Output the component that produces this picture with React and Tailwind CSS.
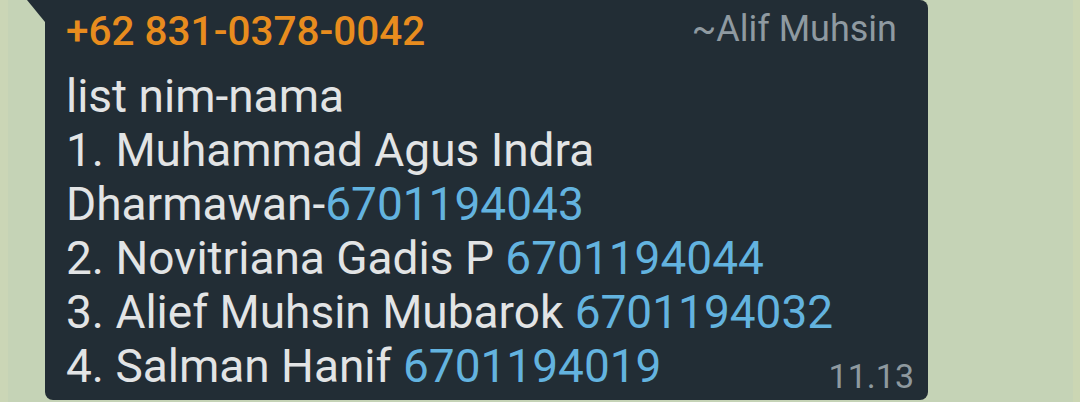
import React from 'react';

const lines = [
    { text: '2. Novitriana Gadis P ', nim: '6701194044' },
    { text: '3. Alief Muhsin Mubarok ', nim: '6701194032' },
];

function App() {
    return (
        <div className="w-[1080px] h-[402px] overflow-hidden flex bg-[#c5d3b6] font-['Roboto',sans-serif]">
            <div className="w-[8px] bg-[#cbd6b6]" />
            <div className="flex-1 flex pl-[19px]">
                {/* bubble tail */}
                <svg width="18" height="22" viewBox="0 0 18 22" className="shrink-0">
                    <polygon points="0,0 18,0 18,22" fill="#222d35" />
                </svg>
                <div className="w-[883px] h-[400px] bg-[#222d35] rounded-tr-[8px] rounded-b-[8px] pl-[21px] pr-[14px] pt-[7px]">
                    <div className="flex justify-between items-start">
                        <span className="text-[40.5px] leading-[48px] font-medium text-[#e88c1e]">+62 831-0378-0042</span>
                        <span className="text-[36px] leading-[44px] text-[#8f9aa1] mr-[17px]">~Alif Muhsin</span>
                    </div>
                    <div className="mt-[14px] text-[46px] leading-[54px] text-[#e2e4e5]">
                        <div>list nim-nama</div>
                        <div>1. Muhammad Agus Indra</div>
                        <div>Dharmawan-<span className="text-[#63b3df]">6701194043</span></div>
                        {lines.map((l) => (
                            <div key={l.nim}>{l.text}<span className="text-[#63b3df]">{l.nim}</span></div>
                        ))}
                        <div className="flex justify-between items-end">
                            <span>4. Salman Hanif <span className="text-[#63b3df]">6701194019</span></span>
                            <span className="text-[34px] leading-[40px] text-[#8e999f] translate-y-[3px]">11.13</span>
                        </div>
                    </div>
                </div>
            </div>
            <div className="w-[7px] bg-[#cbd6b3]" />
        </div>
    );
}

export default App;
